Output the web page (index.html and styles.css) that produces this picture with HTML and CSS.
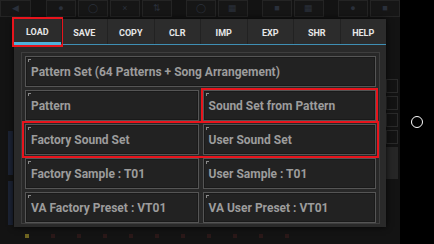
FILE: index.html
```html
<!DOCTYPE html>
<html lang="en">
<head>
    <meta charset="UTF-8">
    <meta name="viewport" content="width=device-width, initial-scale=1.0">
    <title>Load Dialog</title>
    <link rel="stylesheet" href="styles.css">
</head>
<body>
    <div class="screen">
        <div class="app">
            <div class="toolbar">
                <div class="tool wide">&#9664;</div>
                <div class="tool">&#9679;</div>
                <div class="tool">&#9711;</div>
                <div class="tool">&#215;</div>
                <div class="tool">&#8645;</div>
                <div class="tool spaced">&#9711;</div>
                <div class="tool">&#9638;</div>
                <div class="tool spaced">&#9632;</div>
                <div class="tool">&#9638;</div>
                <div class="tool spaced">&#9679;</div>
                <div class="tool">&#9632;</div>
            </div>
            <div class="workspace">
                <div class="side-left">
                    <div class="strip"></div>
                    <div class="strip"></div>
                </div>
                <div class="center"></div>
                <div class="side-right">
                    <div class="knob"></div>
                    <div class="knob"></div>
                    <div class="knob"></div>
                    <div class="knob"></div>
                    <div class="fader"></div>
                </div>
            </div>
            <div class="steps">
                <span class="dot on"></span>
                <span class="dot"></span>
                <span class="dot"></span>
                <span class="dot"></span>
                <span class="dot"></span>
                <span class="dot"></span>
                <span class="dot"></span>
                <span class="dot"></span>
                <span class="dot"></span>
                <span class="dot"></span>
                <span class="dot"></span>
            </div>

            <div class="dialog">
                <div class="tabs">
                    <div class="tab active">LOAD</div>
                    <div class="tab">SAVE</div>
                    <div class="tab">COPY</div>
                    <div class="tab">CLR</div>
                    <div class="tab">IMP</div>
                    <div class="tab">EXP</div>
                    <div class="tab">SHR</div>
                    <div class="tab">HELP</div>
                </div>
                <div class="dialog-body">
                    <div class="frame">
                        <div class="row">
                            <div class="btn">Pattern Set (64 Patterns + Song Arrangement)</div>
                        </div>
                        <div class="row">
                            <div class="btn">Pattern</div>
                            <div class="btn marked">Sound Set from Pattern</div>
                        </div>
                        <div class="row marked">
                            <div class="btn">Factory Sound Set</div>
                            <div class="btn">User Sound Set</div>
                        </div>
                        <div class="row">
                            <div class="btn">Factory Sample : T01</div>
                            <div class="btn">User Sample : T01</div>
                        </div>
                        <div class="row">
                            <div class="btn">VA Factory Preset : VT01</div>
                            <div class="btn">VA User Preset : VT01</div>
                        </div>
                    </div>
                </div>
            </div>
        </div>
        <div class="navbar">
            <span class="home"></span>
        </div>
    </div>
</body>
</html>
```

FILE: styles.css
```css
body {
    margin: 0;
    background-color: #000;
    font-family: Roboto, "Liberation Sans", sans-serif;
}
.screen {
    display: flex;
    width: 434px;
    height: 244px;
    overflow: hidden;
}
.app {
    position: relative;
    width: 400px;
    display: flex;
    flex-direction: column;
    background-color: #131313;
}
.toolbar {
    height: 17px;
    display: flex;
    gap: 2px;
}
.tool {
    width: 29px;
    height: 15px;
    border: 1px solid #242424;
    background-color: #161616;
    color: #2a303b;
    font-size: 9px;
    line-height: 15px;
    text-align: center;
}
.tool.wide {
    width: 30px;
    margin-right: 13px;
}
.tool.spaced {
    margin-left: 12px;
}
.workspace {
    flex: 1;
    display: flex;
}
.side-left {
    width: 14px;
    display: flex;
    flex-direction: column;
    justify-content: flex-end;
    gap: 6px;
    padding-bottom: 2px;
}
.strip {
    width: 5px;
    height: 44px;
    margin-left: 8px;
    background-color: #1b2233;
}
.center {
    flex: 1;
}
.side-right {
    width: 14px;
    display: flex;
    flex-direction: column;
    gap: 3px;
    padding-top: 62px;
}
.knob {
    width: 10px;
    height: 12px;
    border: 1px solid #2a2a2a;
}
.fader {
    width: 12px;
    height: 32px;
    background-color: #262626;
}
.steps {
    height: 17px;
    display: flex;
    align-items: center;
    gap: 22px;
    padding-left: 25px;
}
.dot {
    width: 4px;
    height: 4px;
    background-color: #2a1818;
}
.dot.on {
    background-color: #6e6420;
}

.dialog {
    position: absolute;
    left: 14px;
    top: 19px;
    width: 372px;
    height: 208px;
    background-color: #2a2a2a;
    box-shadow: 0 0 6px rgba(0, 0, 0, 0.8);
    display: flex;
    flex-direction: column;
}
.tabs {
    display: grid;
    grid-template-columns: repeat(8, 1fr);
    height: 25px;
    border-bottom: 1px solid #3f8fb4;
    background-color: #2c2c2c;
}
.tab {
    display: flex;
    align-items: center;
    justify-content: center;
    padding-top: 3px;
    color: #e6e6e6;
    font-size: 9px;
    font-weight: bold;
    border-left: 1px solid #222;
}
.tab:first-child {
    border-left: none;
}
.tab.active {
    outline: 2px solid #e8141c;
    border-bottom: 3px solid #4fb2dc;
    margin-bottom: -1px;
}
.dialog-body {
    flex: 1;
    padding: 7px 6px 3px 7px;
    display: flex;
}
.frame {
    flex: 1;
    border: 1px solid #3e3e3e;
    background-color: #282828;
    padding: 3px 3px 0 3px;
    display: flex;
    flex-direction: column;
    gap: 3px;
}
.row {
    display: flex;
    gap: 4px;
    height: 31px;
}
.row.marked {
    outline: 2px solid #e8141c;
    outline-offset: 1px;
}
.btn {
    position: relative;
    flex: 1;
    background-color: #222;
    border: 1px solid #555;
    box-shadow: inset 0 0 0 1px #1a1a1a;
    color: #9c9c9c;
    font-size: 12px;
    font-weight: bold;
    display: flex;
    align-items: center;
    padding-left: 5px;
    white-space: nowrap;
}
.btn::before {
    content: "";
    position: absolute;
    left: 2px;
    top: 2px;
    width: 2px;
    height: 2px;
    border-left: 1px solid #8a8a8a;
    border-top: 1px solid #8a8a8a;
}
.btn.marked {
    outline: 2px solid #e8141c;
}

.navbar {
    flex: 1;
    background-color: #000;
    display: flex;
    align-items: center;
    justify-content: center;
}
.home {
    width: 10px;
    height: 10px;
    border: 1.5px solid #fff;
    border-radius: 50%;
}
```
